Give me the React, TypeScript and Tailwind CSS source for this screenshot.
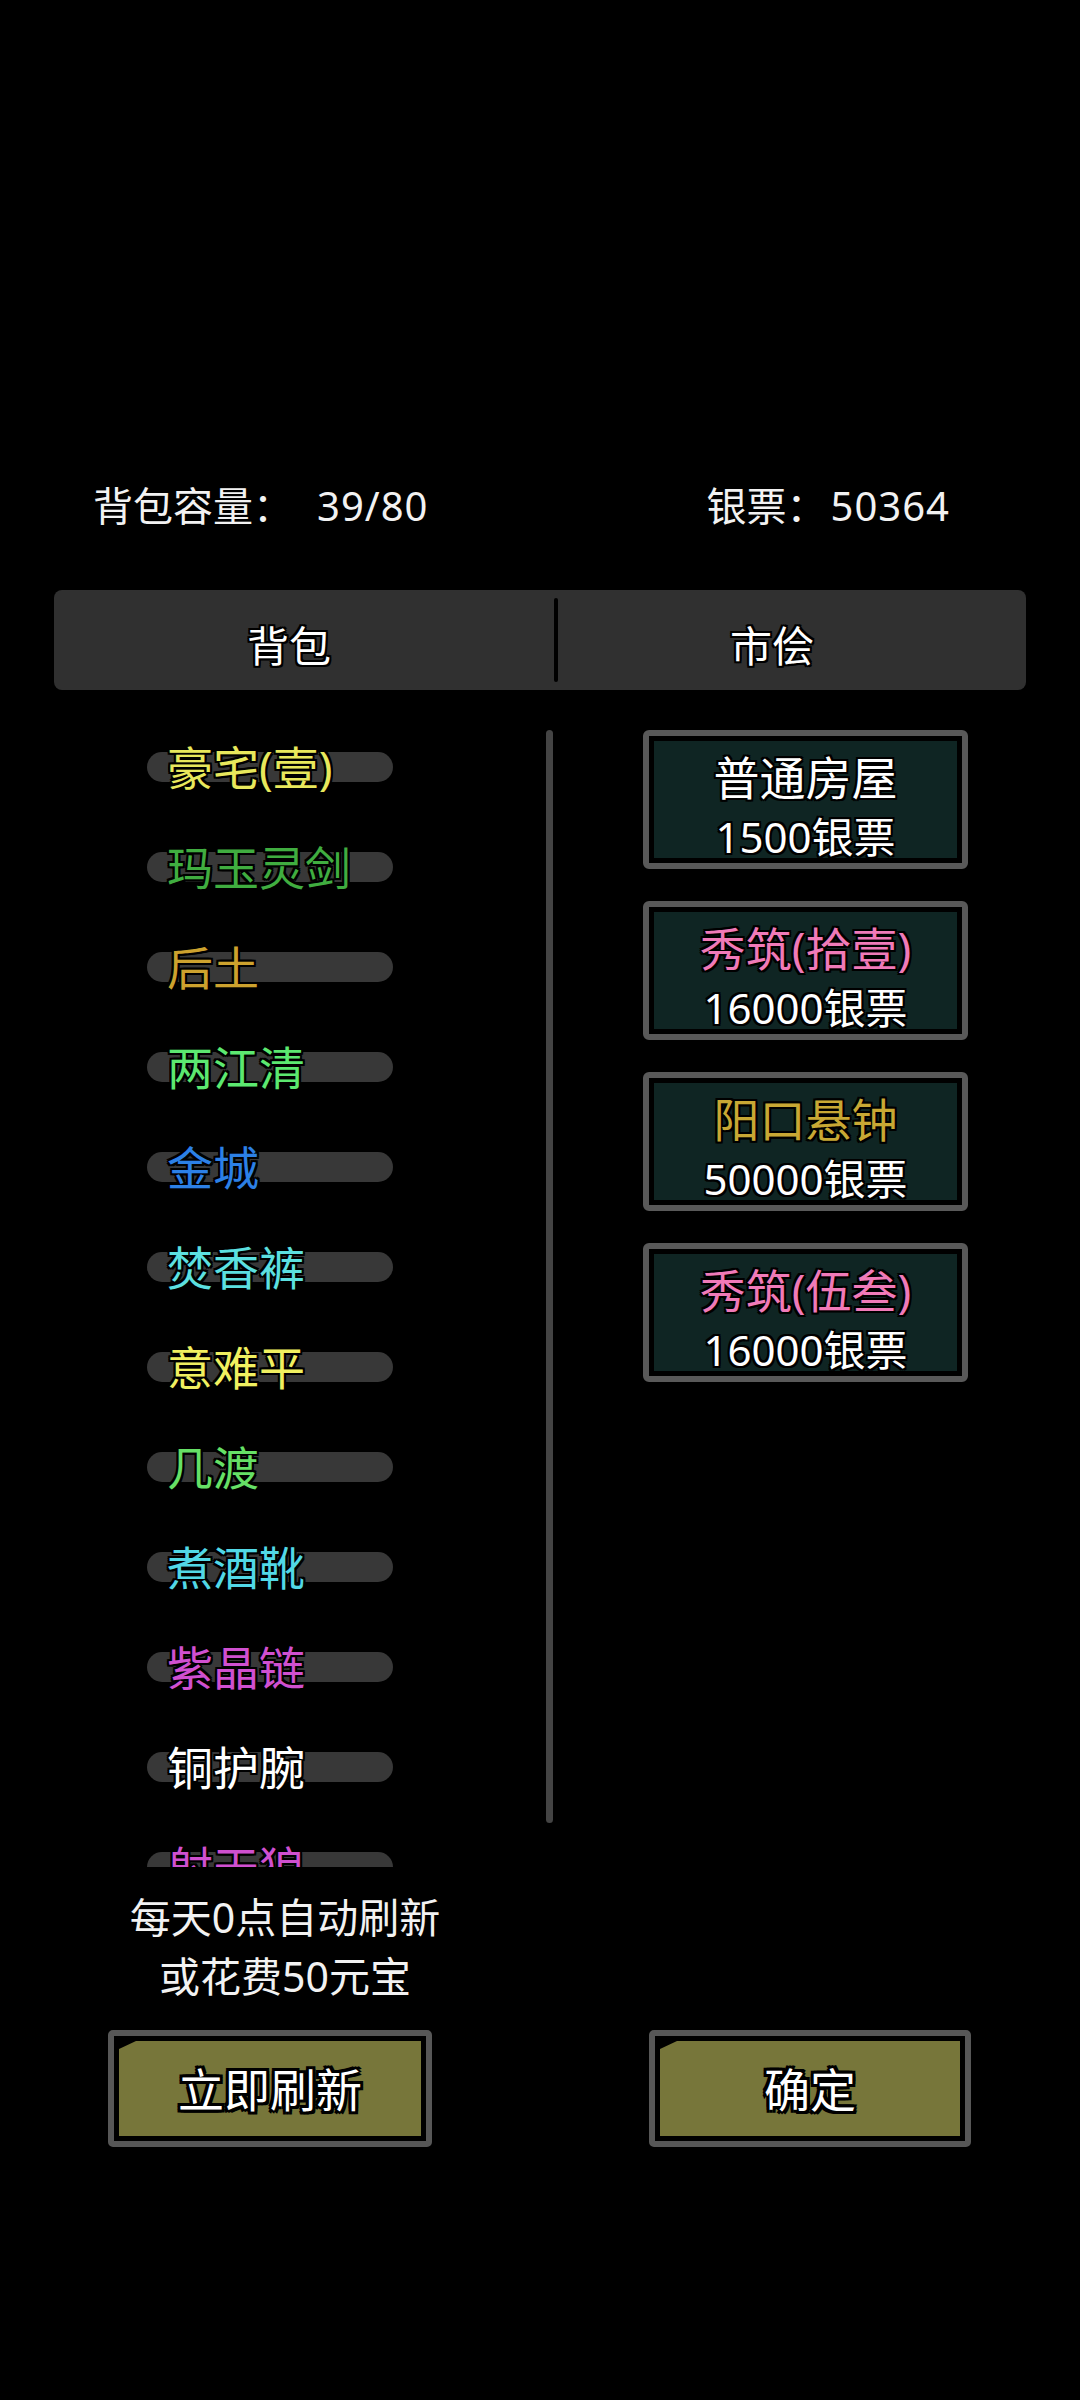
import React from "react";

const items: { name: string; color: string }[] = [
  { name: "豪宅(壹)", color: "text-[#e8e85c]" },
  { name: "玛玉灵剑", color: "text-[#40ad40]" },
  { name: "后土", color: "text-[#cda22e]" },
  { name: "两江清", color: "text-[#5ce870]" },
  { name: "金城", color: "text-[#2c80e6]" },
  { name: "焚香裤", color: "text-[#5ce0e0]" },
  { name: "意难平", color: "text-[#f0f060]" },
  { name: "几渡", color: "text-[#66e066]" },
  { name: "煮酒靴", color: "text-[#52d8e6]" },
  { name: "紫晶链", color: "text-[#d050d0]" },
  { name: "铜护腕", color: "text-[#ffffff]" },
  { name: "射天狼", color: "text-[#d050d0]" },
];

const cards: { title: string; color: string; price: string }[] = [
  { title: "普通房屋", color: "text-[#ffffff]", price: "1500银票" },
  { title: "秀筑(拾壹)", color: "text-[#f07ab8]", price: "16000银票" },
  { title: "阳口悬钟", color: "text-[#c8a834]", price: "50000银票" },
  { title: "秀筑(伍叁)", color: "text-[#f07ab8]", price: "16000银票" },
];

const font = "font-['Noto_Sans','Noto_Sans_CJK_SC',sans-serif]";
const outline =
  "[text-shadow:2px_0_0_#000,-2px_0_0_#000,0_2px_0_#000,0_-2px_0_#000,2px_2px_0_#000,-2px_-2px_0_#000,2px_-2px_0_#000,-2px_2px_0_#000]";
const outlineThick =
  "[text-shadow:3px_0_0_#000,-3px_0_0_#000,0_3px_0_#000,0_-3px_0_#000,3px_3px_0_#000,-3px_-3px_0_#000,3px_-3px_0_#000,-3px_3px_0_#000]";

function OliveButton({ label, width }: { label: string; width: string }) {
  return (
    <div className={`${width} h-[117px] border-[6px] border-[#575757] rounded-[5px] bg-black p-[5px]`}>
      <div className="w-full h-full bg-[#77763a] [clip-path:polygon(17px_0,100%_0,100%_100%,0_100%,0_8px)] flex items-center justify-center">
        <span className={`text-[46px] leading-none text-white ${outlineThick}`}>{label}</span>
      </div>
    </div>
  );
}

export default function App() {
  return (
    <div className={`w-[1080px] h-[2400px] bg-black text-white ${font} overflow-hidden`}>
      {/* header */}
      <div className="pt-[482px] pl-[93px] pr-[130px] flex justify-between h-[530px] text-[40px] leading-[48px] text-[#f2f2f2]">
        <div className="flex">
          <span>背包容量：</span>
          <span className="ml-[24px] tracking-[1px]">39/80</span>
        </div>
        <div className="flex">
          <span>银票：</span>
          <span className="ml-[4px] tracking-[1px]">50364</span>
        </div>
      </div>

      {/* tabs */}
      <div className="mt-[60px] mx-[54px] h-[100px] rounded-[8px] bg-[#303030] flex items-center">
        <div className={`w-[500px] h-full flex items-center justify-center pr-[30px] pt-[10px] text-[42px] ${outline}`}>
          背包
        </div>
        <div className="w-[4px] h-[84px] rounded-full bg-black" />
        <div className={`flex-1 h-full flex items-center justify-center pr-[40px] pt-[10px] text-[42px] ${outline}`}>
          市侩
        </div>
      </div>

      {/* main */}
      <div className="mt-[27px] h-[1150px] flex">
        <div className="w-[546px] h-full overflow-hidden flex flex-col">
          {items.map((it) => (
            <div key={it.name} className="h-[100px] shrink-0 grid items-center pl-[147px]">
              <div className="col-start-1 row-start-1 w-[246px] h-[30px] rounded-full bg-[#383838]" />
              <div
                className={`col-start-1 row-start-1 ml-[20px] text-[46px] leading-none whitespace-nowrap ${it.color} ${outline}`}
              >
                {it.name}
              </div>
            </div>
          ))}
        </div>
        <div className="w-[7px] mt-[13px] h-[1093px] rounded-full bg-[#444444]" />
        <div className="ml-[90px] w-[325px] pt-[13px] flex flex-col gap-[32px]">
          {cards.map((c, i) => (
            <div key={i} className="h-[139px] border-[6px] border-[#595959] rounded-[6px] bg-black p-[5px]">
              <div className="w-full h-full bg-[#0f2523] flex flex-col items-center pt-[10px]">
                <div className={`h-[52px] leading-[52px] text-[46px] whitespace-nowrap ${c.color} ${outline}`}>
                  {c.title}
                </div>
                <div className={`mt-[8px] h-[52px] leading-[52px] text-[42px] whitespace-nowrap text-white ${outline}`}>
                  {c.price}
                </div>
              </div>
            </div>
          ))}
        </div>
      </div>

      {/* refresh note */}
      <div className="mt-[21px] w-[570px] text-center text-[41px] leading-[59px] text-[#f2f2f2]">
        <div>每天0点自动刷新</div>
        <div>或花费50元宝</div>
      </div>

      {/* buttons */}
      <div className="mt-[24px] pl-[108px] flex">
        <OliveButton label="立即刷新" width="w-[324px]" />
        <div className="ml-[217px]">
          <OliveButton label="确定" width="w-[322px]" />
        </div>
      </div>
    </div>
  );
}
